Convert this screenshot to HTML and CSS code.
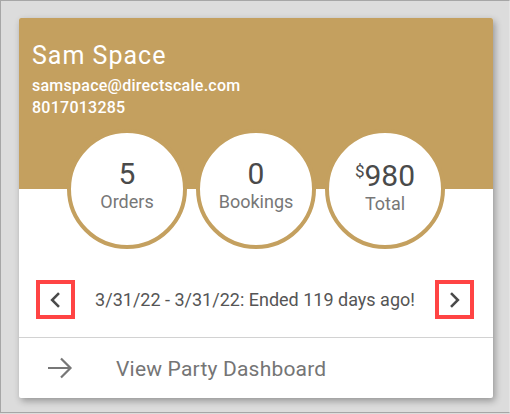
FILE: index.html
```html
<!DOCTYPE html>
<html>
<head>
<meta charset="utf-8">
<link rel="stylesheet" href="styles.css">
</head>
<body>
<div class="frame">
  <div class="card">
    <div class="header">
      <div class="name">Sam Space</div>
      <div class="info">samspace@directscale.com</div>
      <div class="info">8017013285</div>
    </div>
    <div class="stats">
      <div class="circle">
        <div class="num">5</div>
        <div class="label">Orders</div>
      </div>
      <div class="circle">
        <div class="num">0</div>
        <div class="label">Bookings</div>
      </div>
      <div class="circle circle-total">
        <div class="num"><sup class="cur">$</sup>980</div>
        <div class="label">Total</div>
      </div>
    </div>
    <div class="nav">
      <button class="chev">
        <svg viewBox="0 0 24 24" width="32" height="32"><path d="M15.41 7.41L14 6l-6 6 6 6 1.41-1.41L10.83 12z" fill="#4a4a4a"/></svg>
      </button>
      <div class="range">3/31/22 - 3/31/22: Ended 119 days ago!</div>
      <button class="chev">
        <svg viewBox="0 0 24 24" width="32" height="32"><path d="M8.59 16.59L10 18l6-6-6-6-1.41 1.41L13.17 12z" fill="#4a4a4a"/></svg>
      </button>
    </div>
    <div class="link">
      <svg class="arrow" viewBox="0 0 26 22" width="26" height="22"><path d="M1 11H24M14 1.5L23.5 11L14 20.5" fill="none" stroke="#777" stroke-width="2.2"/></svg>
      <span class="link-text">View Party Dashboard</span>
    </div>
  </div>
</div>
</body>
</html>
```
FILE: styles.css
```css
html, body {
  margin: 0;
  padding: 0;
  background: #dcdcdc;
}
.frame {
  border: 1px solid #a6a6a6;
  border-right-color: #e4e4e4;
  padding: 17px 0 0 18px;
  box-sizing: content-box;
  width: 490px;
  height: 394px;
  font-family: Roboto, "Liberation Sans", sans-serif;
}
.card {
  width: 474px;
  height: 380px;
  background: #fff;
  border-radius: 2px;
  box-shadow: 2px 3px 7px rgba(0, 0, 0, 0.32);
  overflow: hidden;
}
.header {
  background: #c4a05f;
  color: #fff;
  padding: 24px 13px 10px 13px;
}
.name {
  font-size: 25px;
  letter-spacing: 1px;
  line-height: 28px;
  margin-bottom: 5px;
}
.info {
  font-size: 16px;
  letter-spacing: 0.25px;
  font-weight: 500;
  line-height: 22px;
}
.stats {
  display: flex;
  justify-content: center;
  gap: 9px;
  background: linear-gradient(#c4a05f 50%, #fff 50%);
}
.circle {
  width: 120px;
  height: 120px;
  box-sizing: border-box;
  border: 4px solid #c4a05f;
  border-radius: 50%;
  background: #fff;
  display: flex;
  flex-direction: column;
  align-items: center;
  padding-top: 25px;
}
.circle-total {
  padding-top: 27px;
}
.num {
  font-size: 30px;
  line-height: 32px;
  color: #4a4a4a;
}
.cur {
  font-size: 17px;
  vertical-align: top;
  position: relative;
  top: 1px;
  line-height: 20px;
}
.label {
  font-size: 18px;
  line-height: 21px;
  margin-top: 1px;
  color: #777;
}
.nav {
  display: flex;
  align-items: center;
  justify-content: space-between;
  padding: 0 19px 0 17px;
  margin-top: 31px;
  height: 39px;
}
.chev {
  width: 39px;
  height: 39px;
  box-sizing: border-box;
  border: 4px solid #ff4444;
  background: #fff;
  padding: 0;
  display: flex;
  align-items: center;
  justify-content: center;
}
.range {
  flex: 1;
  text-align: center;
  font-size: 18px;
  color: #555;
}
.link {
  margin-top: 18px;
  border-top: 1px solid #d2d2d2;
  height: 59px;
  display: flex;
  align-items: center;
  padding-left: 28px;
}
.arrow {
  margin-right: 43px;
}
.link-text {
  font-size: 21px;
  letter-spacing: 0.2px;
  color: #757575;
  position: relative;
  top: 1px;
}
```
